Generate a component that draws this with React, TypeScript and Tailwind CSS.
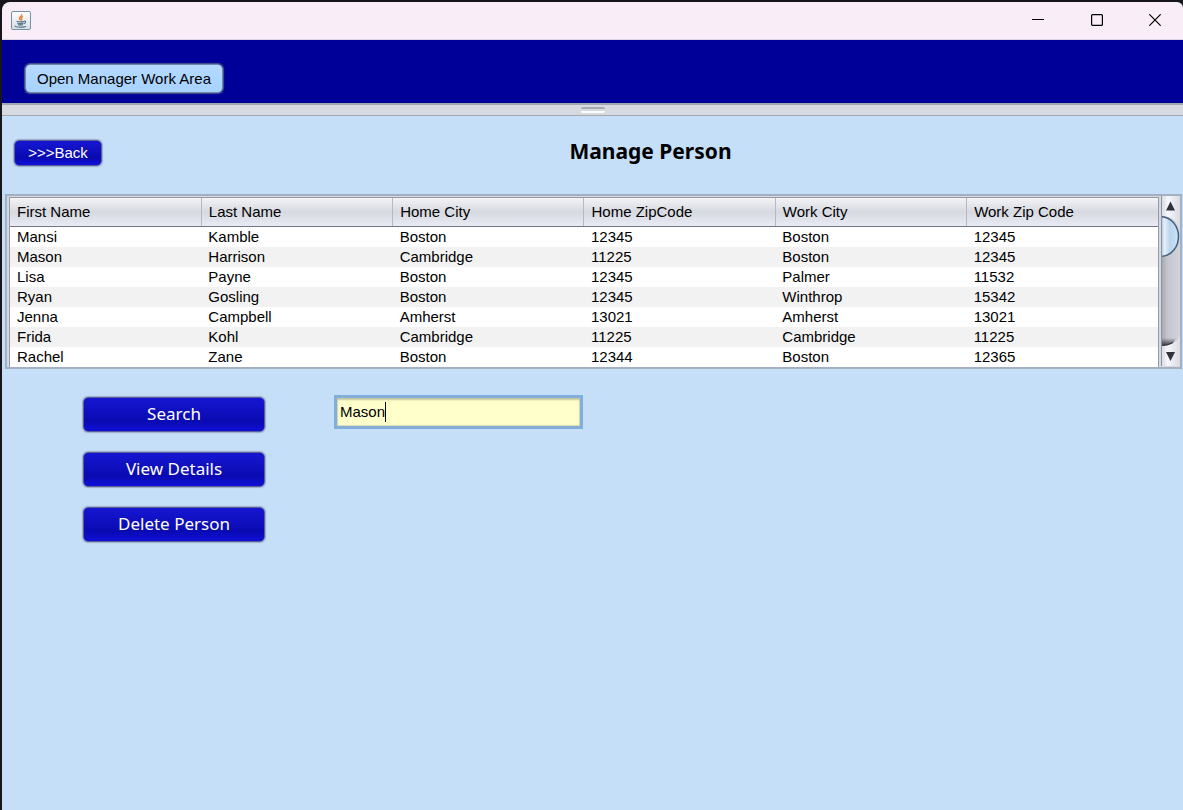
import { useState } from "react";

const columns = ["First Name", "Last Name", "Home City", "Home ZipCode", "Work City", "Work Zip Code"];

const people = [
  ["Mansi", "Kamble", "Boston", "12345", "Boston", "12345"],
  ["Mason", "Harrison", "Cambridge", "11225", "Boston", "12345"],
  ["Lisa", "Payne", "Boston", "12345", "Palmer", "11532"],
  ["Ryan", "Gosling", "Boston", "12345", "Winthrop", "15342"],
  ["Jenna", "Campbell", "Amherst", "13021", "Amherst", "13021"],
  ["Frida", "Kohl", "Cambridge", "11225", "Cambridge", "11225"],
  ["Rachel", "Zane", "Boston", "12344", "Boston", "12365"],
];

const blueButton =
  "rounded-[5px] border border-[#5a5f9c] bg-linear-to-b from-[#1616d2] via-[#0a0ab2] via-70% to-[#1010d8] text-white shadow-[0_0_1px_1px_#9dabc4]";

function JavaIcon() {
  return (
    <svg width="20" height="20" viewBox="0 0 20 20" fill="none" aria-hidden="true">
      <defs>
        <linearGradient id="tile" x1="0" y1="0" x2="0" y2="1">
          <stop offset="0" stopColor="#ffffff" />
          <stop offset="1" stopColor="#d5dde3" />
        </linearGradient>
      </defs>
      <rect x="0.5" y="0.5" width="19" height="18" rx="1.5" fill="url(#tile)" stroke="#7890a5" />
      <path d="M10.8 3.2c.8 1.9-3 2.7-2.3 4.4.2.7 1 1.1 1.1 1.9M12 5.6c-1.6.6-2.3 1.4-1.5 2.3.5.6.2 1.200-.4 1.700" stroke="#ec8136" strokeWidth="1.4" />
      <path d="M5.500 10.300c1.500.500 6 .500 7.800 0M6.200 12c1.700.600 4.800.600 6.400 0M7 13.600c1.500.400 3.700.400 5 0M13.200 10.300c2-.600 2 1.800-.300 2.300M4.500 14.800c-1.300.800 1.500 1.300 5 1.300 3 0 5.500-.400 5.200-1.100" stroke="#58788f" strokeWidth="1.2" />
    </svg>
  );
}

function TitleBar() {
  return (
    <header className="flex h-[38px] shrink-0 items-center justify-between rounded-tl-lg rounded-tr-md border-b border-[#d9d5e5] bg-[#f9eef8] pl-[9px]">
      <JavaIcon />
      <div className="flex h-full pb-[2px]">
        <button aria-label="Minimize" className="flex h-full w-[59px] items-center justify-center">
          <svg width="12" height="12" aria-hidden="true">
            <path d="M0 5.5h12" stroke="#000" />
          </svg>
        </button>
        <button aria-label="Maximize" className="flex h-full w-[59px] items-center justify-center">
          <svg width="12" height="12" fill="none" aria-hidden="true">
            <rect x="0.6" y="0.6" width="10.8" height="10.8" rx="1" stroke="#000" strokeWidth="1.2" />
          </svg>
        </button>
        <button aria-label="Close" className="flex h-full w-[57px] items-center justify-center">
          <svg width="12" height="12" aria-hidden="true">
            <path d="M0.3 0.3l11.4 11.4M11.7 0.3L0.3 11.7" stroke="#000" strokeWidth="1.2" />
          </svg>
        </button>
      </div>
    </header>
  );
}

function ScrollBar() {
  return (
    <svg className="block" width="19" height="170" viewBox="0 0 19 170" fill="none" aria-hidden="true">
      <defs>
        <linearGradient id="track" x1="0" y1="0" x2="1" y2="0">
          <stop offset="0" stopColor="#a5a6ad" />
          <stop offset="0.35" stopColor="#c5c6cd" />
          <stop offset="1" stopColor="#d2d4dc" />
        </linearGradient>
        <linearGradient id="cap" x1="0" y1="0" x2="1" y2="0">
          <stop offset="0" stopColor="#d5d7df" />
          <stop offset="0.35" stopColor="#f6f7fa" />
          <stop offset="1" stopColor="#d9dbe3" />
        </linearGradient>
        <linearGradient id="thumb" x1="0" y1="0" x2="1" y2="0">
          <stop offset="0" stopColor="#a9bfdc" />
          <stop offset="0.2" stopColor="#e4effb" />
          <stop offset="0.5" stopColor="#bcd5ec" />
          <stop offset="1" stopColor="#c6e5f9" />
        </linearGradient>
        <linearGradient id="shade" x1="0" y1="0" x2="0" y2="1">
          <stop offset="0" stopColor="#333333" stopOpacity="0" />
          <stop offset="1" stopColor="#333333" />
        </linearGradient>
      </defs>
      <rect width="19" height="170" fill="url(#track)" />
      <path d="M0 142h15q-2 8-15 8z" fill="url(#shade)" />
      <path d="M0 0h19v36Q16 20 0 20z" fill="url(#cap)" />
      <path d="M0 150q14 0 19-10v30H0z" fill="url(#cap)" />
      <path d="M0 149.5q7 0 12-3" stroke="#34363c" />
      <path d="M0 20.5c11 1 17.5 10 17.5 20S11 60 0 60.5z" fill="url(#thumb)" stroke="#42607d" strokeWidth="1.5" />
      <path d="M9.5 5.5l4.500 9H5z" fill="#303238" />
      <path d="M9.5 165l4.500-9H5z" fill="#303238" />
      <path d="M0.5 0v170" stroke="#8c93a2" />
    </svg>
  );
}

function PeopleTable() {
  return (
    <section className="mr-px ml-[3px] flex border-2 border-[#a4afc2] bg-[#d6d9df] pl-[2px]">
      <div className="mt-px min-w-0 flex-1 border-t border-r border-l border-[#939aaa] bg-white">
        <table className="w-full table-fixed border-collapse text-left text-[15px] leading-5 text-black">
          <thead>
            <tr className="h-7 bg-linear-to-b from-[#f4f4f7] via-[#d7d9e0] via-50% to-[#e9ebf5]">
              {columns.map((name) => (
                <th key={name} scope="col" className="border-r border-b border-r-[#b5b9c3] border-b-[#6f7685] px-[7px] py-0 font-normal last:border-r-0">
                  {name}
                </th>
              ))}
            </tr>
          </thead>
          <tbody>
            {people.map((person) => (
              <tr key={person[0]} className="h-5 bg-white even:bg-[#f2f2f2]">
                {person.map((value, i) => (
                  <td key={columns[i]} className="px-[7px] py-0 leading-5">
                    {value}
                  </td>
                ))}
              </tr>
            ))}
          </tbody>
        </table>
      </div>
      <div className="ml-[2px] h-[170px] shrink-0">
        <ScrollBar />
      </div>
    </section>
  );
}

export default function App() {
  const [query, setQuery] = useState("Mason");

  return (
    <div className="flex min-h-screen flex-col bg-[#15151b] pt-[2px] pl-[2px] font-['Liberation_Sans',Arial,sans-serif]">
      <TitleBar />
      <nav className="flex h-[63px] shrink-0 items-start bg-[#000099] px-[23px] pt-6">
        <button className="h-[29px] rounded-[5px] border border-[#7088a8] bg-linear-to-b from-[#b5daff] to-[#a6d2ff] px-[11px] pt-px text-[15px] text-black shadow-[0_0_1px_1px_#45558d]">
          Open Manager Work Area
        </button>
      </nav>
      <div className="flex h-[13px] shrink-0 justify-center border-t-2 border-b border-t-[#a3a6b3] border-b-[#a3a8b0] bg-[#d6d9df] pt-[2px]">
        <div className="h-[6px] w-6 rounded-[2px] border-t-2 border-b-2 border-t-[#a4a7b2] border-b-white bg-[#d6d9df]" />
      </div>
      <main className="flex-1 bg-[#c5dff8]">
        <div className="flex h-[78px] items-start pt-6 pl-3">
          <button className={`${blueButton} h-[26px] w-[88px] text-[15px] leading-6`}>&gt;&gt;&gt;Back</button>
          <h1 className="flex-1 pl-4 text-center font-['Noto_Sans','Open_Sans',sans-serif] text-[21px] leading-[22px] font-bold text-black">
            Manage Person
          </h1>
        </div>
        <PeopleTable />
        <div className="flex items-start gap-[68px] pt-[26px] pl-20">
          <div className="flex w-[184px] flex-col gap-5 px-px pt-[2px] font-['Noto_Sans',sans-serif] text-[17px]">
            <button className={`${blueButton} h-[35px]`}>Search</button>
            <button className={`${blueButton} h-[35px]`}>View Details</button>
            <button className={`${blueButton} h-[35px]`}>Delete Person</button>
          </div>
          <div className="relative">
            <input
              aria-label="Search by first name"
              value={query}
              onChange={(e) => setQuery(e.target.value)}
              className="h-[34px] w-[249px] border-[3px] border-[#84aeda] bg-[#ffffcc] px-[3px] text-[15px] text-black shadow-[inset_0_2px_2px_#c4c7a3,inset_0_0_1px_1px_#d9dbb9] outline-none"
            />
            <span className="absolute top-[7px] left-[51px] h-5 w-px bg-black" />
          </div>
        </div>
      </main>
    </div>
  );
}
